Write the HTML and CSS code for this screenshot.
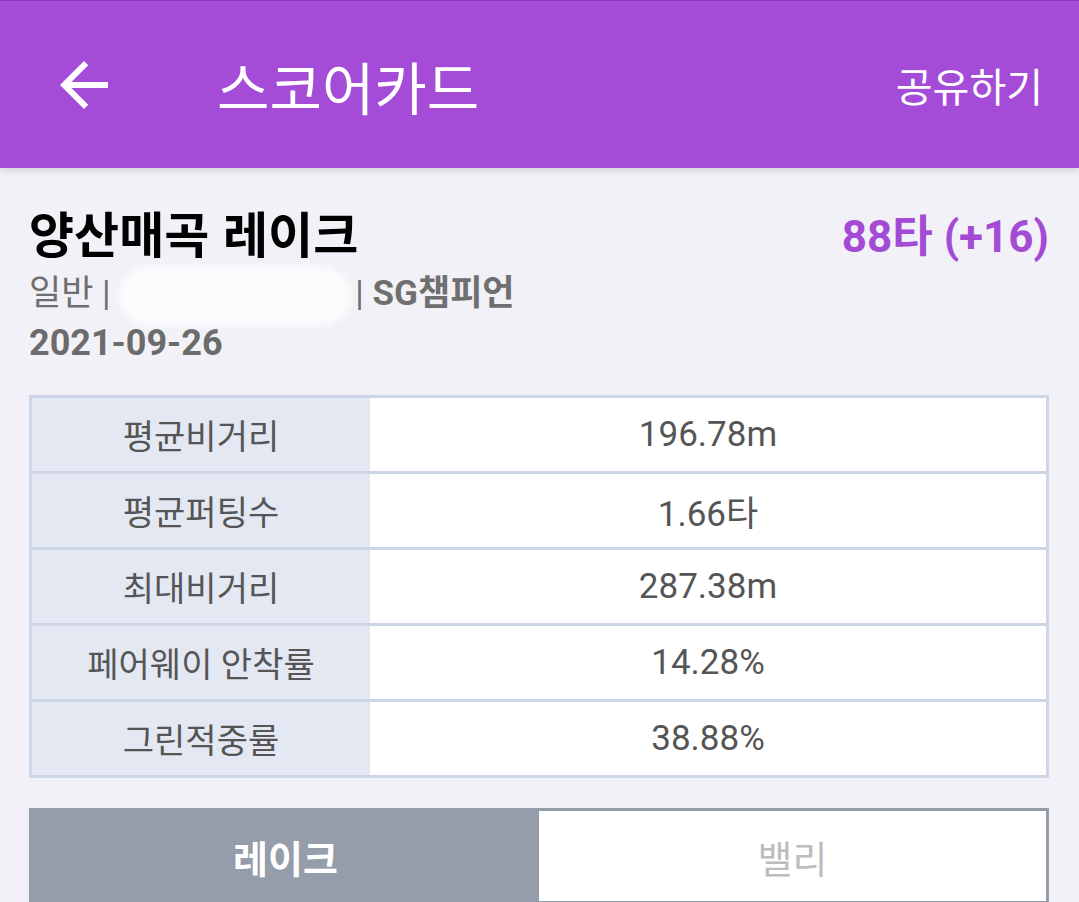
FILE: index.html
```html
<!DOCTYPE html>
<html lang="ko">
<head>
<meta charset="utf-8">
<title>스코어카드</title>
<link rel="stylesheet" href="styles.css">
</head>
<body>
<header class="appbar">
  <svg class="back" viewBox="0 0 24 24" width="72" height="72" aria-hidden="true">
    <path d="M20 11H7.83l5.59-5.59L12 4l-8 8 8 8 1.41-1.41L7.83 13H20v-2z" fill="#fff"/>
  </svg>
  <h1 class="appbar-title">스코어카드</h1>
  <span class="share">공유하기</span>
</header>
<main class="content">
  <section class="summary">
    <div class="summary-top">
      <h2 class="course">양산매곡 레이크</h2>
      <span class="score">88타 (+16)</span>
    </div>
    <div class="meta">일반 | <span class="masked"></span>| <b>SG챔피언</b></div>
    <div class="date">2021-09-26</div>
  </section>
  <section class="stats">
    <div class="row"><div class="label">평균비거리</div><div class="value">196.78m</div></div>
    <div class="row"><div class="label">평균퍼팅수</div><div class="value">1.66타</div></div>
    <div class="row"><div class="label">최대비거리</div><div class="value">287.38m</div></div>
    <div class="row"><div class="label">페어웨이 안착률</div><div class="value">14.28%</div></div>
    <div class="row"><div class="label">그린적중률</div><div class="value">38.88%</div></div>
  </section>
  <div class="toggle">
    <div class="seg active">레이크</div>
    <div class="seg">밸리</div>
  </div>
</main>
</body>
</html>
```

FILE: styles.css
```css
html, body {
  margin: 0;
  padding: 0;
  height: 100%;
  overflow: hidden;
}
body {
  background: #f2f1f7;
  font-family: Roboto, "Noto Sans CJK KR", sans-serif;
}
.appbar {
  box-sizing: border-box;
  height: 168px;
  background: #a44bd7;
  border-top: 1px solid #8d36c6;
  display: flex;
  align-items: center;
  color: #fff;
  box-shadow: 0 2px 8px rgba(0, 0, 0, 0.14);
  position: relative;
}
.back {
  margin-left: 48px;
  flex: none;
}
.appbar-title {
  margin: 0 0 0 97px;
  font-family: "Noto Sans CJK KR", sans-serif;
  font-weight: 400;
  font-size: 57px;
  line-height: 64px;
  flex: 1;
}
.share {
  margin-right: 36px;
  font-family: "Noto Sans CJK KR", sans-serif;
  font-size: 40px;
  line-height: 46px;
}
.content {
  padding: 34px 30px 0 29px;
}
.summary-top {
  display: flex;
  justify-content: space-between;
  align-items: flex-start;
}
.course {
  margin: 0;
  font-family: "Noto Sans CJK KR", sans-serif;
  font-weight: 700;
  font-size: 49px;
  line-height: 60px;
  color: #000;
}
.score {
  color: #a44bd6;
  font-weight: 700;
  font-size: 44px;
  line-height: 60px;
  margin-top: 5px;
}
.meta {
  font-size: 35px;
  line-height: 50px;
  color: #6f6f6f;
}
.meta b {
  font-weight: 700;
}
.masked {
  display: inline-block;
  width: 232px;
  height: 58px;
  vertical-align: middle;
  background: #fcfcfd;
  border-radius: 29px;
  filter: blur(3px);
  margin-right: 4px;
}
.date {
  font-size: 36px;
  font-weight: 700;
  line-height: 50px;
  color: #6b6b6b;
  margin-top: -7px;
}
.stats {
  margin-top: 27px;
  border: 3px solid #ced5e6;
  background: #ced5e6;
  display: grid;
  gap: 3px;
}
.row {
  display: grid;
  grid-template-columns: 338px 1fr;
  height: 73px;
}
.label, .value {
  display: flex;
  align-items: center;
  justify-content: center;
  color: #555;
}
.label {
  background: #e4e8f3;
  font-size: 34px;
}
.value {
  background: #fff;
  font-size: 35px;
}
.toggle {
  margin-top: 30px;
  height: 96px;
  box-sizing: border-box;
  border: 3px solid #959caa;
  display: grid;
  grid-template-columns: 1fr 1fr;
}
.seg {
  display: flex;
  align-items: center;
  justify-content: center;
  font-family: "Noto Sans CJK KR", sans-serif;
  font-size: 38px;
  background: #fff;
  color: #bdbdbd;
}
.seg.active {
  background: #959caa;
  color: #fff;
  font-weight: 700;
}
```
